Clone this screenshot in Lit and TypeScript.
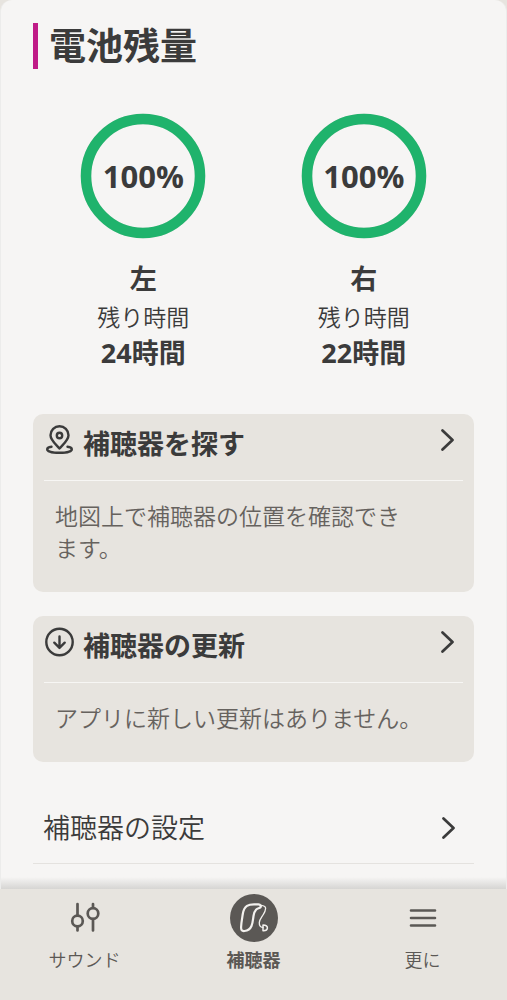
import { LitElement, html, css, svg } from "lit";
import { customElement, property } from "lit/decorators.js";

const FONT = css`"Open Sans", "Noto Sans CJK JP", sans-serif`;

const pinIcon = html`<svg width="30" height="30" viewBox="0 0 30 30" fill="none" stroke="currentColor" stroke-width="2.4" stroke-linecap="round" stroke-linejoin="round" aria-hidden="true">
  <path d="M14.500 23.500C10.500 19 5.500 15.200 5.500 10.300A9 9 0 0 1 23.500 10.300C23.500 15.200 18.500 19 14.500 23.500Z" />
  <circle cx="14.500" cy="10.500" r="2.700" />
  <path d="M6.500 21.800C3.500 22.300 2.200 23 2.200 24.200C2.200 26.400 7.500 27.800 14.500 27.800S26.800 26.400 26.800 24.200C26.800 23 25.500 22.300 22.500 21.800" />
</svg>`;

const downIcon = html`<svg width="30" height="30" viewBox="0 0 30 30" fill="none" stroke="currentColor" stroke-width="2.4" stroke-linecap="round" stroke-linejoin="round" aria-hidden="true">
  <circle cx="14.500" cy="15" r="13.200" />
  <path d="M14.500 9.500V20.500M9.300 15.700L14.500 20.900L19.700 15.700" />
</svg>`;

const chevron = html`<svg class="chevron" width="14" height="24" viewBox="0 0 14 24" fill="none" stroke="currentColor" stroke-width="2.700" stroke-linecap="round" stroke-linejoin="round" aria-hidden="true">
  <path d="M1.500 2.500L11.500 12L1.500 21.500" />
</svg>`;

const soundIcon = svg`<g stroke-width="2.7">
  <path d="M16.500 10V21M16.500 33V36.500M32 10V13.500M32 25V36.500" />
  <circle cx="16.500" cy="27" r="5.300" /><circle cx="32" cy="19.500" r="5.300" />
</g>`;

const aidIcon = svg`<circle cx="24" cy="24" r="24" fill="currentColor" stroke="none" />
<path stroke="#f3f1ee" stroke-width="2.200" d="M12.800 20C13.300 16.500 14.500 13.500 17 11.800C19 10.500 21 10.300 24 10.300H28.500C30.500 10.400 31.400 12 30.500 13.300C29.500 14.500 27.500 14 26.200 15.500C24.300 17.500 23.900 19.500 23.500 22C22.900 26 22.800 29 21.500 32C20 35.500 18 36.700 14.500 37C11.500 37.300 11 35.500 11.100 33C11.300 28.500 12 25 12.800 20Z" />
<path stroke="#f3f1ee" stroke-width="1.300" d="M31 11.300C33.800 11.500 35.700 12.500 35.600 14.500C35.400 17.500 34.600 18.500 33 21C31.200 23.800 29.500 26 29.300 28.500C29.100 31.500 30.500 33.700 33 33.300" />
<path stroke="#f3f1ee" stroke-width="1.500" d="M33 31C36 31 37.600 32.500 37.400 34.200C37.100 36 35.500 37 33 36.800Z" />`;

const menuIcon = svg`<path stroke-width="2.6" d="M12 16.500H36M12 24H36M12 31.500H36" />`;

@customElement("battery-gauge")
export class BatteryGauge extends LitElement {
  @property() side = "";
  @property({ type: Number }) level = 0;
  @property({ type: Number }) hours = 0;

  static styles = css`
    :host {
      display: flex;
      flex-direction: column;
      align-items: center;
      font-family: ${FONT};
      color: #3b3b3b;
    }
    .ring {
      display: grid;
      place-items: center;
      width: 126px;
      height: 126px;
    }
    .ring > * {
      grid-area: 1 / 1;
    }
    .percent {
      font-size: 31px;
      line-height: 40px;
      font-weight: 700;
    }
    .side {
      margin: 20px 0 0;
      font-size: 27px;
      line-height: 40px;
      font-weight: 700;
    }
    .label {
      margin: 0;
      font-size: 23px;
      line-height: 36px;
      font-weight: 350;
    }
    .time {
      margin: 0;
      font-size: 27px;
      line-height: 36px;
      font-weight: 700;
    }
  `;

  render() {
    return html`
      <div class="ring">
        <svg width="126" height="126" viewBox="0 0 126 126" fill="none" aria-hidden="true">
          <circle cx="63" cy="63" r="57" stroke="#dcd9d4" stroke-width="10.500" />
          <circle cx="63" cy="63" r="57" stroke="#1fb36c" stroke-width="10.500" pathLength="100"
            stroke-dasharray="${this.level} 100" transform="rotate(-90 63 63)" />
        </svg>
        <span class="percent">${this.level}%</span>
      </div>
      <h2 class="side">${this.side}</h2>
      <p class="label">残り時間</p>
      <p class="time">${this.hours}時間</p>
    `;
  }
}

@customElement("action-card")
export class ActionCard extends LitElement {
  @property() heading = "";
  @property({ attribute: false }) icon: unknown = null;

  static styles = css`
    :host {
      display: block;
      padding: 0 11px 28px;
      border-radius: 10px;
      background: #e7e4df;
      font-family: ${FONT};
    }
    .head {
      display: flex;
      align-items: flex-start;
      gap: 8px;
      width: 100%;
      height: 67px;
      padding: 11px 8px 0 1px;
      border: 0;
      border-bottom: 1px solid #f7f6f4;
      background: none;
      color: #3b3b3b;
      font: inherit;
      text-align: left;
      cursor: pointer;
    }
    .title {
      flex: 1;
      font-size: 27px;
      line-height: 38px;
      font-weight: 700;
    }
    .chevron {
      margin-top: 3px;
    }
    .text {
      margin: 0;
      padding: 19px 32px 0 11px;
      font-size: 23px;
      line-height: 32px;
      font-weight: 350;
      color: #66625e;
    }
  `;

  render() {
    return html`
      <button class="head" type="button">
        ${this.icon}<span class="title">${this.heading}</span>${chevron}
      </button>
      <p class="text"><slot></slot></p>
    `;
  }
}

@customElement("app-root")
export class AppRoot extends LitElement {
  static styles = css`
    :host {
      display: flex;
      flex-direction: column;
      min-height: 100vh;
      background: #e7e4df;
      font-family: ${FONT};
      color: #3b3b3b;
    }
    .page {
      flex: 1;
      box-sizing: border-box;
      padding: 23px 32px 24px;
      border: solid #ececeb;
      border-width: 0 1px;
      border-radius: 12px 12px 0 0;
      background: linear-gradient(to top, #d6d5d3, #f6f5f4 12px);
    }
    .title {
      margin: 0 0 44px;
      padding-left: 11px;
      border-left: 5px solid #bf1b87;
      font-size: 37px;
      line-height: 46px;
      font-weight: 700;
    }
    .gauges {
      display: grid;
      grid-template-columns: 1fr 1fr;
      margin-bottom: 43px;
    }
    .cards {
      display: grid;
      gap: 24px;
    }
    .phrase {
      white-space: nowrap;
    }
    .row {
      display: flex;
      justify-content: space-between;
      align-items: center;
      margin-top: 31px;
      padding: 15px 18px 15px 10px;
      border-bottom: 1px solid #e4e2df;
      color: inherit;
      font-size: 27px;
      line-height: 40px;
      font-weight: 350;
      text-decoration: none;
    }
    .tabs {
      display: grid;
      grid-template-columns: repeat(3, 1fr);
      padding: 5px 0 26px;
    }
    .tab {
      display: flex;
      flex-direction: column;
      align-items: center;
      gap: 4px;
      padding: 0;
      border: 0;
      background: none;
      color: #5b5855;
      font-family: inherit;
      font-size: 18px;
      line-height: 28px;
      font-weight: 350;
      cursor: pointer;
    }
    .current {
      font-weight: 700;
    }
  `;

  private tab(label: string, icon: unknown, current = false) {
    return html`<button class="tab ${current ? "current" : ""}" type="button" aria-current=${current ? "page" : "false"}>
      <svg width="48" height="48" viewBox="0 0 48 48" fill="none" stroke="currentColor" stroke-linecap="round" stroke-linejoin="round" aria-hidden="true">${icon}</svg>
      <span>${label}</span>
    </button>`;
  }

  render() {
    return html`
      <main class="page">
        <h1 class="title">電池残量</h1>
        <section class="gauges">
          <battery-gauge side="左" level="100" hours="24"></battery-gauge>
          <battery-gauge side="右" level="100" hours="22"></battery-gauge>
        </section>
        <section class="cards">
          <action-card .icon=${pinIcon} heading="補聴器を探す">地図上で補聴器の位置を確認でき<span class="phrase">ます。</span></action-card>
          <action-card .icon=${downIcon} heading="補聴器の更新">アプリに新しい更新はありません。</action-card>
        </section>
        <a class="row" href="#settings"><span>補聴器の設定</span>${chevron}</a>
      </main>
      <nav class="tabs">
        ${this.tab("サウンド", soundIcon)}
        ${this.tab("補聴器", aidIcon, true)}
        ${this.tab("更に", menuIcon)}
      </nav>
    `;
  }
}
